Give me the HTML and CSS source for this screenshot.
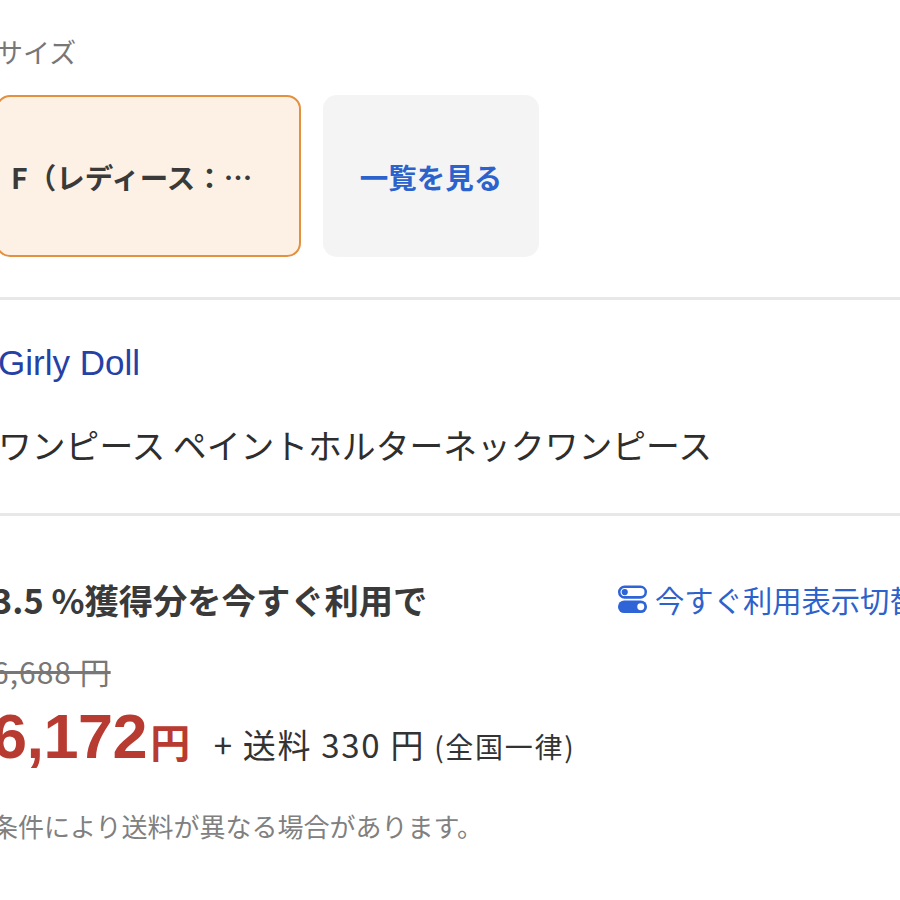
FILE: index.html
```html
<!DOCTYPE html>
<html lang="ja">

<head>
    <meta charset="UTF-8">
    <meta name="viewport" content="width=device-width, initial-scale=1.0">
    <title>Girly Doll ワンピース</title>
    <link rel="stylesheet" href="styles.css">
</head>

<body>
    <div class="page">
        <section class="size-block">
            <div class="size-label">サイズ</div>
            <div class="size-options">
                <div class="size-option selected">F（レディース：…</div>
                <div class="size-option more">一覧を見る</div>
            </div>
        </section>

        <section class="item-block">
            <a class="brand" href="#">Girly Doll</a>
            <div class="item-name">ワンピース ペイントホルターネックワンピース</div>
        </section>

        <section class="price-block">
            <div class="points-row">
                <div class="points-text">3.5 %獲得分を今すぐ利用で</div>
                <a class="points-switch" href="#">
                    <svg class="switch-icon" viewBox="0 0 32 32" width="31" height="31">
                        <rect x="2.3" y="2.8" width="27.4" height="11" rx="5.5" fill="none" stroke="#2f64d6" stroke-width="2.6"/>
                        <circle cx="8" cy="8.3" r="3.2" fill="#2f64d6"/>
                        <rect x="1" y="17" width="30" height="13" rx="6.5" fill="#2f64d6"/>
                        <circle cx="24.5" cy="23.5" r="3.6" fill="#fff"/>
                    </svg>
                    今すぐ利用表示切替
                </a>
            </div>
            <div class="old-price">6,688 円</div>
            <div class="price-row">
                <span class="price">6,172<span class="yen">円</span></span>
                <span class="shipping">+ 送料 330 円 <span class="shipping-note">(全国一律)</span></span>
            </div>
            <div class="note">条件により送料が異なる場合があります。</div>
        </section>
    </div>
</body>

</html>
```

FILE: styles.css
```css
body {
    margin: 0;
    background-color: #fff;
    color: #333;
    font-family: 'Noto Sans CJK JP', 'Noto Sans', sans-serif;
    overflow: hidden;
}

.page {
    width: 910px;
    margin-left: -8px;
}

.size-block {
    padding: 32px 0 40px 4px;
    border-bottom: 3px solid #e8e8e8;
}

.size-label {
    font-size: 27px;
    line-height: 40px;
    color: #777;
}

.size-options {
    display: flex;
    gap: 22px;
    margin-top: 23px;
}

.size-option {
    box-sizing: border-box;
    height: 162px;
    border-radius: 14px;
    display: flex;
    align-items: center;
    justify-content: center;
    font-size: 28.5px;
    font-weight: bold;
}

.selected {
    width: 305px;
    border: 2px solid #e3903f;
    background-color: #fdf1e6;
    color: #3a3a3a;
    justify-content: flex-start;
    padding-left: 13px;
}

.more {
    width: 216px;
    background-color: #f4f4f5;
    color: #2c62cc;
}

.item-block {
    padding: 39px 0 44px 6px;
    border-bottom: 3px solid #e8e8e8;
}

.brand {
    display: block;
    font-family: 'Liberation Sans', 'Noto Sans', sans-serif;
    font-size: 35px;
    line-height: 48px;
    color: #2541a6;
    text-decoration: none;
}

.item-name {
    margin-top: 34px;
    font-size: 33.8px;
    line-height: 48px;
    color: #2e2e2e;
}

.price-block {
    padding: 59px 0 0 0;
}

.points-row {
    display: flex;
    justify-content: space-between;
    align-items: center;
}

.points-text {
    font-size: 34.3px;
    font-weight: bold;
    line-height: 48px;
    color: #3a3a3a;
}

.points-switch {
    display: flex;
    align-items: center;
    gap: 7px;
    width: 285px;
    flex-shrink: 0;
    white-space: nowrap;
    font-size: 29.3px;
    line-height: 48px;
    color: #2c62cc;
    text-decoration: none;
}

.switch-icon {
    flex-shrink: 0;
}

.old-price {
    margin-top: 28px;
    font-size: 30px;
    line-height: 40px;
    letter-spacing: 1px;
    color: #777;
    text-decoration: line-through;
}

.price-row {
    display: flex;
    align-items: baseline;
    gap: 24px;
    margin-top: 10px;
    line-height: 70px;
}

.price {
    font-family: 'Liberation Sans', 'Noto Sans', sans-serif;
    font-size: 63px;
    font-weight: bold;
    color: #b83b31;
    letter-spacing: -0.5px;
}

.yen {
    font-family: 'Noto Sans CJK JP', sans-serif;
    font-size: 40px;
    margin-left: 3px;
}

.shipping {
    font-size: 33px;
    letter-spacing: 1.7px;
    color: #333;
}

.shipping-note {
    font-size: 28px;
}

.note {
    margin-top: 27px;
    font-size: 26px;
    line-height: 36px;
    color: #808080;
}
```
